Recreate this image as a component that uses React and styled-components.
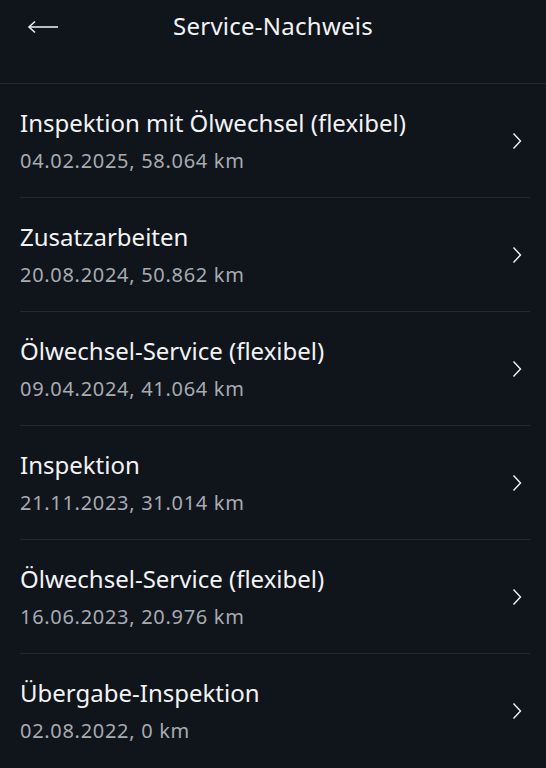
import React from "react";
import styled, { createGlobalStyle } from "styled-components";

const Global = createGlobalStyle`
  html, body {
    margin: 0;
    padding: 0;
    background: #10141b;
  }
  body {
    font-family: "Noto Sans", "Open Sans", sans-serif;
    -webkit-font-smoothing: antialiased;
  }
`;

const Screen = styled.div`
  width: 546px;
  min-height: 768px;
  background: #10141b;
  color: #f2f3f5;
  overflow: hidden;
`;

const Header = styled.header`
  height: 83px;
  display: grid;
  grid-template-columns: 60px 1fr 60px;
  align-items: start;
  border-bottom: 1px solid #232831;
`;

const BackButton = styled.button`
  background: none;
  border: none;
  padding: 0;
  margin: 19px 0 0 27px;
  width: 32px;
  height: 16px;
  display: flex;
  align-items: center;
  cursor: pointer;
`;

const Title = styled.h1`
  margin: 0;
  padding-top: 10px;
  text-align: center;
  font-size: 24px;
  font-weight: 400;
  line-height: 32px;
  color: #f2f3f5;
  letter-spacing: 0.25px;
`;

const List = styled.ul`
  list-style: none;
  margin: 0;
  padding: 0;
`;

const Row = styled.li`
  height: 114px;
  margin: 0 16px 0 20px;
  display: flex;
  align-items: center;
  justify-content: space-between;
  border-bottom: ${(p) => (p.$last ? "none" : "1px solid #232831")};
  box-sizing: border-box;
  cursor: pointer;
`;

const Texts = styled.div`
  display: flex;
  flex-direction: column;
  gap: 10px;
`;

const Name = styled.span`
  font-size: 24px;
  line-height: 30px;
  color: #f2f3f5;
`;

const Meta = styled.span`
  font-size: 20px;
  line-height: 26px;
  letter-spacing: 0.7px;
  color: #a7abb2;
`;

const Chevron = styled.svg`
  width: 10px;
  height: 18px;
  margin-right: 8px;
  flex-shrink: 0;
`;

const entries = [
  { name: "Inspektion mit Ölwechsel (flexibel)", meta: "04.02.2025, 58.064 km" },
  { name: "Zusatzarbeiten", meta: "20.08.2024, 50.862 km" },
  { name: "Ölwechsel-Service (flexibel)", meta: "09.04.2024, 41.064 km" },
  { name: "Inspektion", meta: "21.11.2023, 31.014 km" },
  { name: "Ölwechsel-Service (flexibel)", meta: "16.06.2023, 20.976 km" },
  { name: "Übergabe-Inspektion", meta: "02.08.2022, 0 km" },
];

export default function App() {
  return (
    <Screen>
      <Global />
      <Header>
        <BackButton aria-label="Zurück">
          <svg width="32" height="16" viewBox="0 0 32 16" fill="none">
            <path d="M2 8H31" stroke="#e6e8eb" strokeWidth="1.6" />
            <path d="M8 2.5L2 8l6 5.5" stroke="#e6e8eb" strokeWidth="1.6" />
          </svg>
        </BackButton>
        <Title>Service-Nachweis</Title>
        <div />
      </Header>
      <List>
        {entries.map((e, i) => (
          <Row key={i} $last={i === entries.length - 1}>
            <Texts>
              <Name>{e.name}</Name>
              <Meta>{e.meta}</Meta>
            </Texts>
            <Chevron viewBox="0 0 10 18" fill="none">
              <path d="M1.5 1.5L8.5 9l-7 7.5" stroke="#f2f3f5" strokeWidth="1.4" />
            </Chevron>
          </Row>
        ))}
      </List>
    </Screen>
  );
}
